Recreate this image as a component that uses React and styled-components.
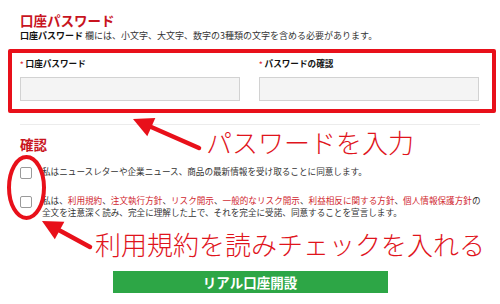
import React from "react";
import styled, { createGlobalStyle } from "styled-components";

const GlobalStyle = createGlobalStyle`
  body {
    margin: 0;
    background: #ffffff;
  }
`;

const Page = styled.div`
  position: relative;
  width: 500px;
  height: 304px;
  overflow: hidden;
  box-sizing: border-box;
  padding-top: 13px;
  background: #ffffff;
  color: #333333;
  font-family: "Noto Sans CJK JP", "Noto Sans", sans-serif;
`;

const SectionTitle = styled.h2`
  margin: ${(p) => p.$top || 0}px 20px 0;
  font-size: 13.5px;
  line-height: 15px;
  font-weight: 700;
  color: #c8141e;
`;

const Description = styled.p`
  margin: 3px 20px 0;
  font-size: 9px;
  line-height: 10px;
  color: #333333;
  white-space: nowrap;

  strong {
    font-weight: 700;
    color: #111111;
  }
`;

//red frame round the two password fields
const HighlightBox = styled.div`
  margin: 8px 4px 0 8px;
  border: 4px solid #e8101a;
  border-radius: 2px;
  padding: 4px 13px 8px 8px;
  display: grid;
  grid-template-columns: 220px 220px;
  column-gap: 19px;
`;

const Field = styled.div`
  display: flex;
  flex-direction: column;
`;

const Label = styled.label`
  font-size: 8.6px;
  line-height: 12px;
  font-weight: 700;
  color: #111111;

  span {
    color: #e0303a;
    font-size: 7px;
    margin-right: 2px;
  }
`;

const Input = styled.input`
  margin-top: 7px;
  height: 24px;
  box-sizing: border-box;
  border: 1px solid #d2d2d2;
  background: #f4f4f4;
  padding: 0 6px;
  outline: none;
`;

const Divider = styled.hr`
  margin: 11px 20px 0;
  border: none;
  border-top: 1px solid #ececec;
`;

const CheckList = styled.div`
  margin: 13px 20px 0;
  display: flex;
  flex-direction: column;
  gap: 15px;
`;

const CheckRow = styled.div`
  display: flex;
  align-items: flex-start;
  gap: 10px;
`;

const Box = styled.span`
  flex: none;
  width: 12px;
  height: 12px;
  margin-top: 2px;
  box-sizing: border-box;
  border: 1px solid #9a9a9a;
  border-radius: 2px;
  background: #ffffff;
`;

const CheckText = styled.p`
  margin: 0;
  font-size: 8.6px;
  line-height: 12px;
  color: #333333;
  white-space: nowrap;
`;

const Link = styled.span`
  color: #d0262e;
`;

const SubmitButton = styled.button`
  display: block;
  margin: 53px auto 0;
  width: 275px;
  height: 22px;
  border: none;
  background: #2da646;
  color: #ffffff;
  font-family: "Noto Sans CJK JP", sans-serif;
  font-size: 13.5px;
  font-weight: 700;
  line-height: 22px;
  padding: 0;
`;

// annotation layer drawn over the form
const Callout = styled.div`
  position: absolute;
  left: ${(p) => p.$x}px;
  top: ${(p) => p.$y}px;
  font-size: 26px;
  line-height: 30px;
  font-weight: 300;
  color: #e0141c;
  white-space: nowrap;
  pointer-events: none;
`;

const Overlay = styled.svg`
  position: absolute;
  left: 0;
  top: 0;
  pointer-events: none;
`;

function Arrow({ x1, y1, x2, y2 }) {
  const dx = x2 - x1;
  const dy = y2 - y1;
  const len = Math.hypot(dx, dy);
  const ux = dx / len;
  const uy = dy / len;
  const headLen = 20;
  const headW = 10;
  const bx = x2 - ux * headLen;
  const by = y2 - uy * headLen;
  const px = -uy * headW;
  const py = ux * headW;
  return (
    <g fill="#e8101a" stroke="#e8101a">
      <line x1={x1} y1={y1} x2={bx + ux * 2} y2={by + uy * 2} strokeWidth="4.5" strokeLinecap="round" />
      <polygon points={`${x2},${y2} ${bx + px},${by + py} ${bx - px},${by - py}`} stroke="none" />
    </g>
  );
}

export default function App() {
  return (
    <Page>
      <GlobalStyle />
      <SectionTitle>口座パスワード</SectionTitle>
      <Description>
        <strong>口座パスワード</strong> 欄には、小文字、大文字、数字の3種類の文字を含める必要があります。
      </Description>

      <HighlightBox>
        <Field>
          <Label><span>*</span>口座パスワード</Label>
          <Input type="password" />
        </Field>
        <Field>
          <Label><span>*</span>パスワードの確認</Label>
          <Input type="password" />
        </Field>
      </HighlightBox>

      <Divider />

      <SectionTitle $top={12}>確認</SectionTitle>
      <CheckList>
        <CheckRow>
          <Box />
          <CheckText>私はニュースレターや企業ニュース、商品の最新情報を受け取ることに同意します。</CheckText>
        </CheckRow>
        <CheckRow>
          <Box />
          <CheckText>
            私は、<Link>利用規約</Link>、<Link>注文執行方針</Link>、<Link>リスク開示</Link>、<Link>一般的なリスク開示</Link>、<Link>利益相反に関する方針</Link>、<Link>個人情報保護方針</Link>の
            <br />
            全文を注意深く読み、完全に理解した上で、それを完全に受諾、同意することを宣言します。
          </CheckText>
        </CheckRow>
      </CheckList>

      <SubmitButton>リアル口座開設</SubmitButton>

      <Callout $x={206} $y={127}>パスワードを入力</Callout>
      <Callout $x={95} $y={229}>利用規約を読みチェックを入れる</Callout>

      <Overlay width="500" height="304" viewBox="0 0 500 304">
        <ellipse cx="26.5" cy="187.5" rx="17.5" ry="30.5" fill="none" stroke="#e8101a" strokeWidth="4" />
        <Arrow x1={199} y1={148} x2={133} y2={119} />
        <Arrow x1={90} y1={247} x2={42} y2={221} />
      </Overlay>
    </Page>
  );
}
